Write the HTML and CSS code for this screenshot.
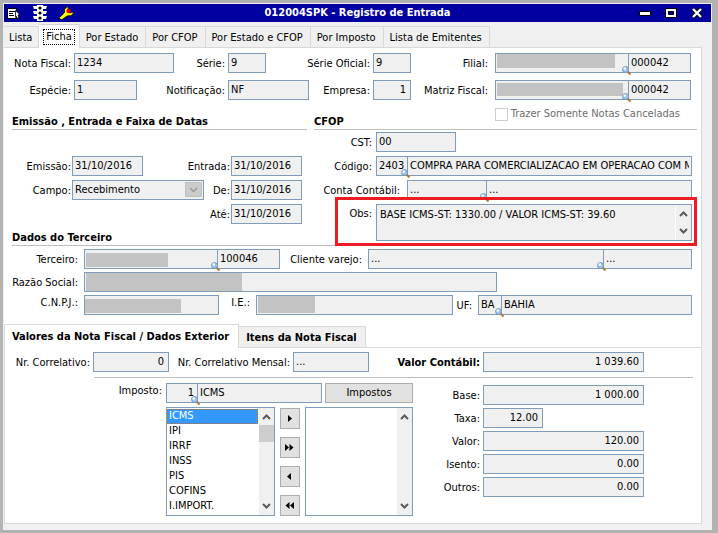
FILE: index.html
```html
<!DOCTYPE html>
<html lang="pt-BR">
<head>
  <meta charset="UTF-8" />
  <meta name="viewport" content="width=device-width, initial-scale=1.0" />
  <title>012004SPK - Registro de Entrada</title>
  <link rel="stylesheet" href="styles.css">
</head>
<body>
  <svg width="0" height="0" class="sprite" aria-hidden="true">
    <symbol id="lupa" viewBox="0 0 9 9">
      <path d="M5.500 5.500l3 3" stroke="#b07a2c" stroke-width="2" />
      <circle cx="3.500" cy="3.500" r="3" fill="#9cc4f0" stroke="#6f93bd" stroke-width="0.900" />
      <circle cx="2.800" cy="2.600" r="1.300" fill="#fff" />
    </symbol>
    <symbol id="seta-cima" viewBox="0 0 9 6">
      <path d="M1 5l3.500-3.500L8 5" fill="none" stroke="#5a5a5a" stroke-width="2" />
    </symbol>
    <symbol id="seta-baixo" viewBox="0 0 9 6">
      <path d="M1 1l3.500 3.500L8 1" fill="none" stroke="#5a5a5a" stroke-width="2" />
    </symbol>
  </svg>

  <div class="window">
    <header class="titlebar">
      <div class="tools">
        <button type="button" aria-label="Menu">
          <svg width="14" height="14" viewBox="0 0 14 14"><path d="M0 2h10v11H0z" /><path d="M1 3h8v9H1z" fill="#fff" /><path d="M2 5.500h6M2 7.500h4M2 9.500h5" stroke="#000" /><path d="M8.500 4.500l4.500 4-2 .5 1 3-1.500.5-1-2-1 1z" fill="#fff" stroke="#000" stroke-width="0.800" /></svg>
        </button>
        <button type="button" aria-label="Semáforo">
          <svg width="14" height="16" viewBox="0 0 14 16"><path d="M4 0h6v1h4l-1 3h-3v2h4l-1 3h-3v2h4l-1 3h-3v2H4v-2H1l-1-3h4V9H1L0 6h4V4H1L0 1h4z" fill="#fff" /><circle cx="7" cy="3" r="1.600" /><circle cx="7" cy="8" r="1.600" /><circle cx="7" cy="13" r="1.600" /></svg>
        </button>
        <button type="button" aria-label="Ferramentas">
          <svg width="15" height="14" viewBox="0 0 15 14"><path d="M.5 11.500l5-5V3.500L8 .8l1.500.7-1 3L10.500 7l3-1 .9 1.200-2.400 2.600H8.500L3 13.500H1z" fill="#ff0" stroke="#000" stroke-width="0.800" /><circle cx="9.500" cy="5" r="2.200" fill="#e00000" /></svg>
        </button>
      </div>
      <h1>012004SPK - Registro de Entrada</h1>
      <div class="controls">
        <button type="button" aria-label="Minimizar">
          <svg width="12" height="12" viewBox="0 0 12 12"><path d="M0.500 4.500h11v4h-11z" fill="#fff" stroke="#000" /></svg>
        </button>
        <button type="button" aria-label="Maximizar">
          <svg width="12" height="12" viewBox="0 0 12 12"><path d="M0.500 1.500h11v9h-11z" fill="#fff" stroke="#000" /><path d="M3.500 4.500h5v3h-5z" fill="#0000a0" stroke="#000" /></svg>
        </button>
        <button type="button" aria-label="Fechar">
          <svg width="12" height="12" viewBox="0 0 12 12"><path d="M2 2l8 8M10 2l-8 8" stroke="#000" stroke-width="4" /><path d="M2 2l8 8M10 2l-8 8" stroke="#fff" stroke-width="2.400" /></svg>
        </button>
      </div>
    </header>

    <nav class="tabs">
      <button type="button">Lista</button>
      <button type="button" class="active"><span>Ficha</span></button>
      <button type="button">Por Estado</button>
      <button type="button">Por CFOP</button>
      <button type="button">Por Estado e CFOP</button>
      <button type="button">Por Imposto</button>
      <button type="button">Lista de Emitentes</button>
    </nav>

    <main class="panel">
      <div class="nota">
        <label for="nota">Nota Fiscal:</label>
        <input id="nota" value="1234" readonly>
        <label for="serie">Série:</label>
        <input id="serie" class="w-short" value="9" readonly>
        <label for="serie-oficial">Série Oficial:</label>
        <input id="serie-oficial" value="9" readonly>
        <label for="filial" class="wide-gap">Filial:</label>
        <div class="pair">
          <div class="first grow">
            <input id="filial" readonly>
            <span class="mask filial"></span>
            <svg class="lupa"><use href="#lupa" /></svg>
          </div>
          <input class="w-code" aria-label="Código da filial" value="000042" readonly>
        </div>

        <label for="especie">Espécie:</label>
        <input id="especie" class="w-kind" value="1" readonly>
        <label for="notificacao">Notificação:</label>
        <input id="notificacao" value="NF" readonly>
        <label for="empresa">Empresa:</label>
        <input id="empresa" class="num" value="1" readonly>
        <label for="matriz" class="wide-gap">Matriz Fiscal:</label>
        <div class="pair">
          <div class="first grow">
            <input id="matriz" readonly>
            <span class="mask matriz"></span>
            <svg class="lupa"><use href="#lupa" /></svg>
          </div>
          <input class="w-code" aria-label="Código da matriz fiscal" value="000042" readonly>
        </div>
      </div>

      <div class="columns">
        <section>
          <div class="heading"><h2>Emissão , Entrada e Faixa de Datas</h2></div>
          <div class="datas">
            <label for="emissao">Emissão:</label>
            <input id="emissao" class="w-date" value="31/10/2016" readonly>
            <label for="entrada">Entrada:</label>
            <input id="entrada" value="31/10/2016" readonly>
            <label for="campo">Campo:</label>
            <div class="combo">
              <select id="campo" disabled><option>Recebimento</option></select>
              <svg viewBox="0 0 17 15"><path d="M.5.5h16v14H.5z" fill="#ccc" stroke="#bfbfbf" /><path d="M5 6l3.500 3.500L12 6" fill="none" stroke="#999" stroke-width="1.500" /></svg>
            </div>
            <label for="de">De:</label>
            <input id="de" value="31/10/2016" readonly>
            <label for="ate" class="last">Até:</label>
            <input id="ate" value="31/10/2016" readonly>
          </div>
        </section>

        <section>
          <div class="heading">
            <h2>CFOP</h2>
            <div class="check">
              <input type="checkbox" id="canceladas" disabled>
              <label for="canceladas">Trazer Somente Notas Canceladas</label>
            </div>
          </div>
          <div class="cfop">
            <div class="row">
              <label for="cst">CST:</label>
              <input id="cst" class="w-cst" value="00" readonly>
            </div>
            <div class="row">
              <label for="codigo">Código:</label>
              <div class="pair grow">
                <div class="first w-cfop">
                  <input id="codigo" value="2403" readonly>
                  <svg class="lupa"><use href="#lupa" /></svg>
                </div>
                <input class="grow" aria-label="Descrição do CFOP" value="COMPRA PARA COMERCIALIZACAO EM OPERACAO COM MERCADORIA" readonly>
              </div>
            </div>
            <div class="row conta">
              <label for="conta">Conta Contábil:</label>
              <div class="pair grow">
                <div class="first w-conta">
                  <input id="conta" value="..." readonly>
                  <svg class="lupa"><use href="#lupa" /></svg>
                </div>
                <input class="grow" aria-label="Descrição da conta" value="..." readonly>
              </div>
            </div>
            <div class="row obs">
              <label for="obs">Obs:</label>
              <div class="memo grow">
                <textarea id="obs" readonly>BASE ICMS-ST: 1330.00 / VALOR ICMS-ST: 39.60</textarea>
                <div class="scroll"><svg><use href="#seta-cima" /></svg><svg><use href="#seta-baixo" /></svg></div>
              </div>
              <span class="highlight"></span>
            </div>
          </div>
        </section>
      </div>

      <section class="terceiro">
        <h2>Dados do Terceiro</h2>
        <div class="row">
          <label for="terceiro" class="lead">Terceiro:</label>
          <div class="pair w-terceiro">
            <div class="first grow">
              <input id="terceiro" readonly>
              <span class="mask nome"></span>
              <svg class="lupa"><use href="#lupa" /></svg>
            </div>
            <input class="w-code" aria-label="Código do terceiro" value="100046" readonly>
          </div>
          <label for="cliente" class="w-cliente">Cliente varejo:</label>
          <div class="pair grow">
            <div class="first grow">
              <input id="cliente" value="..." readonly>
              <svg class="lupa"><use href="#lupa" /></svg>
            </div>
            <input class="w-varejo" aria-label="Código do cliente varejo" value="..." readonly>
          </div>
        </div>
        <div class="row">
          <label for="razao" class="lead">Razão Social:</label>
          <div class="first w-razao">
            <input id="razao" readonly>
            <span class="mask razao"></span>
          </div>
        </div>
        <div class="row">
          <label for="cnpj" class="lead raised">C.N.P.J.:</label>
          <div class="first w-cnpj">
            <input id="cnpj" readonly>
            <span class="mask cnpj"></span>
          </div>
          <label for="ie" class="w-ie-label raised">I.E.:</label>
          <div class="first w-ie">
            <input id="ie" readonly>
            <span class="mask ie"></span>
          </div>
          <label for="uf" class="w-uf-label">UF:</label>
          <div class="pair grow">
            <div class="first w-uf">
              <input id="uf" value="BA" readonly>
              <svg class="lupa"><use href="#lupa" /></svg>
            </div>
            <input class="grow" aria-label="Nome do estado" value="BAHIA" readonly>
          </div>
        </div>
      </section>

      <nav class="subtabs">
        <button type="button" class="active">Valores da Nota Fiscal / Dados Exterior</button>
        <button type="button">Itens da Nota Fiscal</button>
      </nav>

      <section class="valores">
        <div class="correlativos">
          <label for="correlativo">Nr. Correlativo:</label>
          <input id="correlativo" class="num" value="0" readonly>
          <label for="mensal">Nr. Correlativo Mensal:</label>
          <input id="mensal" value="..." readonly>
          <label for="contabil" class="strong">Valor Contábil:</label>
          <input id="contabil" class="num" value="1 039.60" readonly>
        </div>
        <hr>
        <div class="impostos">
          <label for="imposto" class="w-imposto-label">Imposto:</label>
          <div class="picker">
            <div class="picker-top">
              <div class="pair grow">
                <div class="first w-imposto">
                  <input id="imposto" class="tight" value="1" readonly>
                  <svg class="lupa"><use href="#lupa" /></svg>
                </div>
                <input class="grow" aria-label="Nome do imposto" value="ICMS" readonly>
              </div>
              <button type="button" class="btn w-btn">Impostos</button>
            </div>
            <div class="lists">
              <div class="list">
                <select size="7" aria-label="Impostos disponíveis">
                  <option selected>ICMS</option>
                  <option>IPI</option>
                  <option>IRRF</option>
                  <option>INSS</option>
                  <option>PIS</option>
                  <option>COFINS</option>
                  <option>I.IMPORT.</option>
                </select>
                <div class="scroll"><svg><use href="#seta-cima" /></svg><i class="thumb"></i><svg><use href="#seta-baixo" /></svg></div>
              </div>
              <div class="moves">
                <button type="button" class="btn" aria-label="Adicionar"><svg viewBox="0 0 9 7"><path d="M3 0l4 3.500L3 7z" /></svg></button>
                <button type="button" class="btn" aria-label="Adicionar todos"><svg viewBox="0 0 9 7"><path d="M0 0l4 3.500L0 7zM4.500 0l4 3.500-4 3.500z" /></svg></button>
                <button type="button" class="btn" aria-label="Remover"><svg viewBox="0 0 9 7"><path d="M6 0L2 3.500 6 7z" /></svg></button>
                <button type="button" class="btn" aria-label="Remover todos"><svg viewBox="0 0 9 7"><path d="M4.500 0l-4 3.500 4 3.500zM9 0L5 3.500 9 7z" /></svg></button>
              </div>
              <div class="list">
                <select size="7" aria-label="Impostos selecionados"></select>
                <div class="scroll"><svg><use href="#seta-cima" /></svg><svg><use href="#seta-baixo" /></svg></div>
              </div>
            </div>
          </div>
          <div class="totais">
            <label for="base">Base:</label>
            <input id="base" class="num" value="1 000.00" readonly>
            <label for="taxa">Taxa:</label>
            <input id="taxa" class="num w-taxa" value="12.00" readonly>
            <label for="valor">Valor:</label>
            <input id="valor" class="num" value="120.00" readonly>
            <label for="isento">Isento:</label>
            <input id="isento" class="num" value="0.00" readonly>
            <label for="outros">Outros:</label>
            <input id="outros" class="num" value="0.00" readonly>
          </div>
        </div>
      </section>
    </main>
  </div>
</body>
</html>
```
FILE: styles.css
```css
* {
  box-sizing: border-box;
}
body {
  margin: 0;
  padding: 3px 6px 3px 3px;
  background: #b3b3b3;
  font-family: Tahoma, "DejaVu Sans Condensed", "DejaVu Sans", sans-serif;
  font-size: 11px;
  line-height: 14px;
  color: #000;
}
button,
input,
select,
textarea {
  font: inherit;
  color: inherit;
  margin: 0;
  border-radius: 0;
}
h1,
h2 {
  margin: 0;
  font-size: 11px;
  font-weight: bold;
}
.sprite {
  position: absolute;
}
.window {
  border: 1px solid #f0f0f0;
  background: #f0f0f0;
  padding-bottom: 5px;
}

/* title bar */
.titlebar {
  display: grid;
  grid-template-columns: 1fr auto 1fr;
  align-items: center;
  height: 18px;
  background: #0000a0;
  color: #fff;
}
.titlebar button {
  display: flex;
  padding: 0;
  border: 0;
  background: none;
}
.tools,
.controls {
  display: flex;
  align-items: center;
  gap: 12px;
}
.tools {
  padding-left: 3px;
}
.controls {
  justify-content: flex-end;
  gap: 14px;
  padding-right: 8px;
}

/* main tabs */
.tabs {
  display: flex;
  align-items: flex-end;
  padding-top: 2px;
}
.tabs button {
  height: 21px;
  padding: 2px 7px 0 6px;
  border: 1px solid #d9d9d9;
  border-width: 1px 1px 0 0;
  background: #f0f0f0;
  white-space: nowrap;
}
.tabs button:first-child {
  padding: 2px 6px 0 5px;
}
.tabs .active {
  height: 24px;
  margin-bottom: -1px;
  padding: 0 4px;
  background: #fff;
  z-index: 1;
}
.tabs .active span {
  display: block;
  padding: 0 2px;
  border: 1px dotted #000;
}
.panel {
  margin-right: 9px;
  border: 1px solid #d9d9d9;
  border-left: 0;
  background: #fff;
}

/* fields */
label {
  display: flex;
  align-items: center;
  justify-content: flex-end;
  padding-top: 2px;
  white-space: nowrap;
  min-width: 0;
}
input:not([type="checkbox"]) {
  display: block;
  width: 100%;
  min-width: 0;
  height: 20px;
  padding: 0 2px 2px;
  border: 1px solid #7f9db9;
  background: #f0f0f0;
}
input.num {
  padding-right: 4px;
  text-align: right;
}
.pair,
.row {
  display: flex;
  min-width: 0;
}
.first {
  position: relative;
  flex: none;
}
.pair .first + input {
  flex: none;
  border-left: 0;
}
.pair input.grow,
.grow,
.pair .first.grow {
  flex: 1;
  min-width: 0;
}
.pair .first + input.grow {
  flex: 1;
}
.lupa {
  position: absolute;
  right: -2px;
  bottom: -2px;
  z-index: 1;
  width: 9px;
  height: 9px;
}
.mask {
  position: absolute;
  top: 1px;
  left: 2px;
  height: 14px;
  background: #c3c3c3;
}
.mask.filial { width: 118px; }
.mask.matriz { top: 3px; width: 126px; height: 13px; }
.mask.nome { top: 4px; width: 82px; }
.mask.razao { width: 156px; height: 18px; }
.mask.cnpj { top: 4px; left: 1px; width: 96px; }
.mask.ie { width: 57px; height: 17px; }

input.w-short { width: 38px; }
input.w-kind { width: 63px; }
input.w-date { width: 71px; }
.row input.w-cst { width: 80px; }
.pair input.w-code { width: 62px; }
.pair input.w-varejo { width: 88px; }
.w-cfop { width: 32px; }
.w-conta { width: 80px; }
.w-terceiro { flex: none; width: 196px; }
.w-razao { width: 413px; }
.w-cnpj { width: 135px; }
.w-ie { width: 197px; }
.w-uf { width: 24px; }
.w-imposto { width: 32px; }
.w-btn { width: 88px; }
input.w-taxa { width: 60px; }

/* invoice header */
.nota {
  display: grid;
  grid-template-columns: 67px 100px 48px 81px 58px 38px 78px 1fr;
  gap: 7px 3px;
  padding: 5px 10px 0 0;
}
.nota .wide-gap {
  padding-right: 4px;
}

/* dates and CFOP */
.columns {
  display: grid;
  grid-template-columns: 295px 1fr;
  column-gap: 7px;
  padding: 6px 4px 0 8px;
}
.heading {
  display: flex;
  align-items: flex-end;
  height: 24px;
  border-bottom: 1px solid #bfbfbf;
}
.heading h2 {
  flex: 1;
}
.check {
  display: flex;
  align-self: flex-start;
  align-items: center;
  gap: 3px;
  padding: 1px 17px 0 0;
  color: #6d6d6d;
}
.check label {
  padding-top: 0;
}
.check input {
  appearance: none;
  width: 13px;
  height: 13px;
  border: 1px solid #ccc;
  background: #fff;
}
.datas {
  display: grid;
  grid-template-columns: 59px 132px 1fr 71px;
  gap: 4px 1px;
  padding: 26px 5px 0 0;
}
.datas .last {
  grid-column: 3;
}
.combo {
  position: relative;
}
.combo select {
  appearance: none;
  display: block;
  width: 100%;
  height: 20px;
  padding: 0 2px;
  border: 1px solid #7f9db9;
  background: #f0f0f0;
  opacity: 1;
}
.combo svg {
  position: absolute;
  top: 2px;
  right: 2px;
  width: 17px;
  height: 15px;
}
.cfop {
  display: flex;
  flex-direction: column;
  gap: 4px;
  padding: 2px 5px 0 0;
}
.cfop .row {
  gap: 4px;
}
.cfop label {
  flex: none;
  width: 58px;
}
.cfop .conta label {
  width: 89px;
  padding-right: 3px;
}
.obs {
  position: relative;
}
.obs label {
  align-items: flex-start;
  padding-top: 3px;
}
.memo,
.list {
  display: flex;
  border: 1px solid #7f9db9;
}
.memo {
  height: 37px;
  background: #f0f0f0;
}
.memo textarea {
  flex: 1;
  padding: 3px;
  border: 0;
  background: none;
  resize: none;
  overflow: hidden;
}
.scroll {
  display: flex;
  flex: none;
  flex-direction: column;
  align-items: center;
  justify-content: space-between;
  width: 16px;
  padding: 6px 0;
  border-left: 1px solid #fff;
  background: #f0f0f0;
}
.scroll svg {
  width: 9px;
  height: 6px;
}
.highlight {
  position: absolute;
  top: -7px;
  right: -5px;
  bottom: -5px;
  left: 21px;
  border: 3px solid #ed1c24;
  pointer-events: none;
  z-index: 2;
}

/* third party */
.terceiro {
  display: flex;
  flex-direction: column;
  gap: 3px;
  margin-top: -11px;
  padding: 0 4px 9px 8px;
}
.terceiro h2 {
  height: 16px;
  padding-top: 1px;
  border-bottom: 1px solid #bfbfbf;
}
.terceiro .row {
  gap: 6px;
  padding-right: 5px;
}
.terceiro label {
  flex: none;
}
.terceiro .lead { width: 66px; }
.terceiro .w-cliente { width: 76px; }
.terceiro .w-ie-label { width: 25px; }
.terceiro .w-uf-label { width: 13px; }
.terceiro .raised {
  padding: 0 0 5px;
}

/* values */
.subtabs {
  display: flex;
  align-items: flex-end;
  border-bottom: 1px solid #d9d9d9;
}
.subtabs button {
  height: 21px;
  padding: 2px 8px 0 7px;
  border: 1px solid #d9d9d9;
  border-width: 1px 1px 0 0;
  background: #f0f0f0;
  font-weight: bold;
  white-space: nowrap;
}
.subtabs .active {
  height: 24px;
  margin-bottom: -1px;
  padding: 0 9px 0 7px;
  border-left-width: 1px;
  background: #fff;
}
.valores {
  padding: 4px 8px 7px;
  border-left: 1px solid #d9d9d9;
}
.correlativos {
  display: grid;
  grid-template-columns: 77px 76px 118px 76px 108px 161px;
  column-gap: 3px;
}
.strong {
  font-weight: bold;
}
hr {
  height: 1px;
  margin: 5px 0 5px 81px;
  border: 0;
  background: #bfbfbf;
}
.impostos {
  display: flex;
  align-items: flex-start;
  gap: 4px;
}
.w-imposto-label {
  flex: none;
  width: 149px;
  height: 16px;
  padding-top: 0;
}
.picker {
  flex: none;
  width: 247px;
}
.picker-top {
  display: flex;
  gap: 3px;
  margin-bottom: 4px;
}
input.tight {
  padding-right: 3px;
  text-align: right;
}
.btn {
  height: 20px;
  padding: 0;
  border: 1px solid #adadad;
  background: #e1e1e1;
}
.lists {
  display: flex;
  gap: 5px;
}
.list {
  flex: 1;
  min-width: 0;
  height: 109px;
}
.list select {
  flex: 1;
  min-width: 0;
  padding: 1px 0;
  border: 0;
  outline: 0;
  background: #fff;
  overflow: hidden;
}
.list option {
  height: 15px;
  min-height: 15px;
  padding: 0 2px;
  line-height: 15px;
}
.list option:checked {
  background: linear-gradient(#3399ff, #3399ff);
  -webkit-text-fill-color: #fff;
  outline: 1px dotted #c76b1a;
  outline-offset: -1px;
}
.list .thumb {
  width: 15px;
  height: 17px;
  margin: 5px 0 auto;
  background: #cdcdcd;
}
.moves {
  display: flex;
  flex: none;
  flex-direction: column;
  gap: 8px;
  padding-top: 1px;
}
.moves .btn {
  width: 20px;
  height: 21px;
}
.moves svg {
  width: 9px;
  height: 7px;
}
.totais {
  display: grid;
  grid-template-columns: 63px 161px;
  gap: 3px;
  padding-top: 2px;
}
```
